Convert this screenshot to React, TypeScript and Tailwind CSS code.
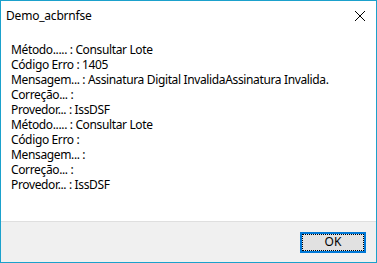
const lines = [
  'Método..... : Consultar Lote',
  'Código Erro : 1405',
  'Mensagem... : Assinatura Digital InvalidaAssinatura Invalida.',
  'Correção... :',
  'Provedor... : IssDSF',
  'Método..... : Consultar Lote',
  'Código Erro :',
  'Mensagem... :',
  'Correção... :',
  'Provedor... : IssDSF',
]

export default function App() {
  return (
    <div
      className="flex h-[263px] w-[377px] flex-col border border-[#1ba1cc] bg-white text-[12px] text-black"
      style={{ fontFamily: '"Noto Sans", "Open Sans", sans-serif' }}
    >
      <div className="flex h-[29px] items-center justify-between pl-[5px] pr-[9px]">
        <span className="leading-none tracking-[-0.2px]">Demo_acbrnfse</span>
        <svg width="12" height="12" viewBox="0 0 12 12" className="mr-[1px]">
          <path d="M1 1 L11 11 M11 1 L1 11" stroke="#000" strokeWidth="1" />
        </svg>
      </div>
      <div className="flex-1 pl-[10px] pt-[12px] tracking-[-0.36px]">
        {lines.map((l, i) => (
          <div key={i} className="h-[15px] leading-[15px] whitespace-pre">
            {l}
          </div>
        ))}
      </div>
      <div className="flex h-[41px] items-center justify-end border-t border-[#dfdfdf] bg-[#f0f0f0] pr-[10px]">
        <button className="flex h-[21px] w-[66px] items-center justify-center border-2 border-[#0078d7] bg-[#e1e1e1] p-0">
          <span className="flex h-full w-full items-center justify-center border border-dotted border-black leading-none">
            OK
          </span>
        </button>
      </div>
    </div>
  )
}
